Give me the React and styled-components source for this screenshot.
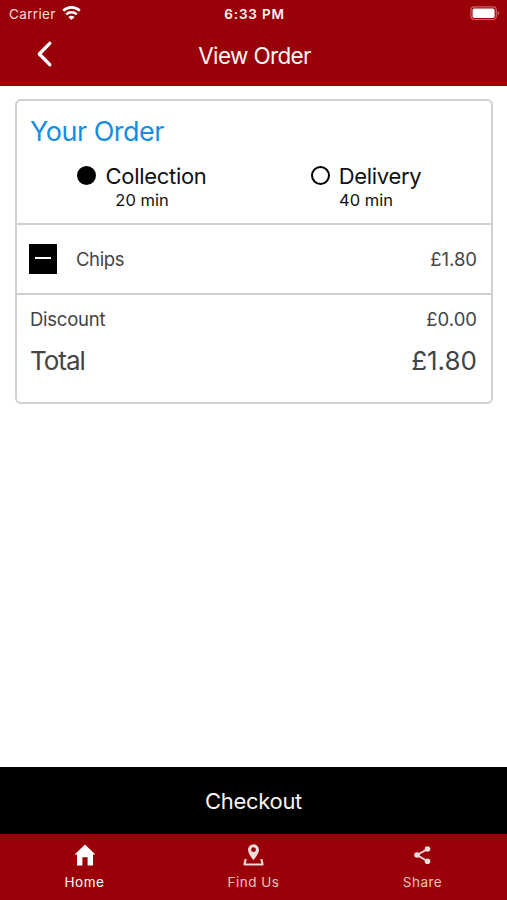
import React, { useState } from "react";
import styled, { createGlobalStyle } from "styled-components";

const GlobalStyle = createGlobalStyle`
  * {
    box-sizing: border-box;
  }
  body {
    margin: 0;
    background: #fff;
    font-family: Inter, "Liberation Sans", sans-serif;
  }
  button {
    border: none;
    padding: 0;
    background: none;
    color: inherit;
    font: inherit;
    cursor: pointer;
  }
`
const Screen = styled.div`
  display: flex;
  flex-direction: column;
  height: 100vh;
  overflow: hidden;
`
const Header = styled.header`
  height: 86px;
  flex: none;
  background: #9a0007;
  color: #fff5f4;
`
const StatusBar = styled.div`
  display: grid;
  grid-template-columns: 1fr auto 1fr;
  align-items: center;
  height: 27px;
  padding: 0 7px 0 9px;
  font-size: 13.5px;
`
const Carrier = styled.div`
  display: flex;
  align-items: center;
  gap: 6px;
  color: #f6dcdc;
  letter-spacing: 0.35px;
`
const Clock = styled.div`
  font-weight: 600;
  font-size: 13.5px;
  letter-spacing: 0.8px;
`
const BatteryBox = styled.div`
  display: flex;
  justify-content: flex-end;
`
const NavBar = styled.div`
  display: grid;
  grid-template-columns: 90px 1fr 90px;
  align-items: center;
  height: 58px;
`
const BackButton = styled.button`
  display: flex;
  height: 32px;
  padding-left: 35px;
`
const Title = styled.h1`
  margin: 0;
  padding-left: 2px;
  text-align: center;
  font-size: 22.5px;
  font-weight: 400;
  line-height: 28px;
  letter-spacing: -0.65px;
`
const Content = styled.main`
  flex: 1;
  padding: 13px 14px 0 15px;
`
const Card = styled.section`
  height: 305px;
  border: 2px solid #d0d0d0;
  border-radius: 6px;
  color: #444;
`
const OrderHead = styled.div`
  height: 124px;
  padding: 13px 13px 0;
  border-bottom: 2px solid #d0d0d0;
`
const Heading = styled.h2`
  margin: 0;
  color: #168de2;
  font-size: 27px;
  font-weight: 400;
  line-height: 36px;
  letter-spacing: -0.5px;
`
const Options = styled.div`
  display: grid;
  grid-template-columns: 1fr 1fr;
  margin-top: 13px;
`
const Option = styled.button`
  display: flex;
  flex-direction: column;
  align-items: center;
  color: #111;
`
const OptionName = styled.span`
  display: flex;
  align-items: center;
  gap: 9px;
  font-size: 22px;
  line-height: 26px;
  letter-spacing: -0.3px;
`
const Radio = styled.span`
  width: 19px;
  height: 19px;
  margin-bottom: 2px;
  border: 2px solid #000;
  border-radius: 50%;
  background: ${(props) => (props.$checked ? "#000" : "transparent")};
`
const OptionTime = styled.span`
  font-size: 16.5px;
  line-height: 22px;
`
const ItemRow = styled.div`
  display: flex;
  align-items: center;
  height: 70px;
  padding: 0 14px 0 12px;
  border-bottom: 2px solid #d0d0d0;
  font-size: 18.5px;
`
const RemoveButton = styled.button`
  display: flex;
  justify-content: center;
  align-items: center;
  width: 28px;
  height: 30px;
  margin-right: 19px;
  background: #000;
`
const Minus = styled.span`
  width: 16px;
  height: 2px;
  margin-bottom: 2px;
  background: #fff;
`
const ItemName = styled.span`
  flex: 1;
  letter-spacing: -0.4px;
`
const Totals = styled.div`
  padding: 10px 14px 0 13px;
`
const SumRow = styled.div`
  display: flex;
  justify-content: space-between;
  align-items: center;
  height: ${(props) => (props.$large ? "54px" : "28px")};
  font-size: ${(props) => (props.$large ? "26px" : "18.5px")};
`
const SumLabel = styled.span`
  letter-spacing: ${(props) => (props.$large ? "-1px" : "-0.25px")};
`
const Checkout = styled.button`
  && {
    flex: none;
    height: 67px;
    background: #000;
    color: #f4f4f4;
    font-size: 22px;
    letter-spacing: -0.3px;
  }
`
const TabBar = styled.nav`
  display: grid;
  grid-template-columns: repeat(3, 1fr);
  flex: none;
  height: 66px;
  background: #9a0007;
`
const TabButton = styled.button`
  && {
    display: flex;
    flex-direction: column;
    align-items: center;
    padding-top: 10px;
    color: ${(props) => (props.$active ? "#fff" : "#e6c3c3")};
    font-size: 13.5px;
    line-height: 20px;
  }
`
const TabLabel = styled.span`
  margin-top: 6px;
  letter-spacing: 0.5px;
`

const WifiIcon = () => (
  <svg width="19" height="15" viewBox="0 0 19 15" fill="none" stroke="#fff">
    <path d="M1.2 4.7C5.9.2 13.1.2 17.8 4.7" strokeWidth="2.6" />
    <path d="M4.2 8.3c3-2.8 7.6-2.8 10.6 0" strokeWidth="2.4" />
    <path d="M9.5 14 6.4 11.1c1.7-1.7 4.5-1.7 6.2 0z" fill="#fff" stroke="none" />
  </svg>
)

const BatteryIcon = () => (
  <svg width="30" height="15" viewBox="0 0 30 15">
    <rect x="0.9" y="0.9" width="25.4" height="12.6" rx="3.4" fill="none" stroke="#c9666a" strokeWidth="1.2" />
    <rect x="2.6" y="2.6" width="22" height="9.4" rx="1.8" fill="#fff" />
    <path d="M27.6 5v4.4c2.3-.8 2.3-3.6 0-4.4z" fill="#c9666a" />
  </svg>
)

const BackIcon = () => (
  <svg width="18" height="28" viewBox="0 0 18 28" fill="none">
    <path d="M14.8 3.3 4.3 14l10.5 10.7" stroke="#fff" strokeWidth="3.3" strokeLinecap="round" strokeLinejoin="round" />
  </svg>
)

const HomeIcon = () => (
  <svg width="22" height="22" viewBox="0 0 22 22">
    <path d="M11 0.5 21.4 10.6H19v10.8h-5.4v-8.2H8.4v8.2H3V10.6H.6z" fill="#fff" />
  </svg>
)

const FindIcon = () => (
  <svg width="22" height="22" viewBox="0 0 22 22">
    <path
      d="M10.5 .3a5.5 5.5 0 0 0-5.5 5.5c0 3.9 5.5 10.4 5.5 10.4s5.5-6.5 5.5-10.4A5.5 5.5 0 0 0 10.5 .3zm0 3a2.4 2.4 0 1 1 0 4.8 2.4 2.4 0 0 1 0-4.8z"
      fill="#f0dcdc"
      fillRule="evenodd"
    />
    <path d="M2.7 15 1.4 20.4h18.2L18.3 15" fill="none" stroke="#f0dcdc" strokeWidth="2" strokeLinejoin="round" />
  </svg>
)

const ShareIcon = () => (
  <svg width="22" height="22" viewBox="0 0 22 22" fill="#f0dcdc">
    <path d="M15.5 5.1 5.1 11l10.4 6.2" fill="none" stroke="#f0dcdc" strokeWidth="1.8" />
    <circle cx="15.5" cy="5" r="2.8" />
    <circle cx="5" cy="11" r="2.8" />
    <circle cx="15.5" cy="17.2" r="2.8" />
  </svg>
)

const options = [
  { name: "Collection", time: "20 min" },
  { name: "Delivery", time: "40 min" },
]

const tabs = [
  { label: "Home", Icon: HomeIcon },
  { label: "Find Us", Icon: FindIcon },
  { label: "Share", Icon: ShareIcon },
]

export default function App() {
  const [method, setMethod] = useState("Collection")
  const [tab, setTab] = useState("Home")

  return (
    <Screen>
      <GlobalStyle />
      <Header>
        <StatusBar>
          <Carrier>
            Carrier <WifiIcon />
          </Carrier>
          <Clock>6:33 PM</Clock>
          <BatteryBox>
            <BatteryIcon />
          </BatteryBox>
        </StatusBar>
        <NavBar>
          <BackButton aria-label="Back">
            <BackIcon />
          </BackButton>
          <Title>View Order</Title>
        </NavBar>
      </Header>
      <Content>
        <Card>
          <OrderHead>
            <Heading>Your Order</Heading>
            <Options>
              {options.map((option) => (
                <Option key={option.name} onClick={() => setMethod(option.name)}>
                  <OptionName>
                    <Radio $checked={method === option.name} />
                    {option.name}
                  </OptionName>
                  <OptionTime>{option.time}</OptionTime>
                </Option>
              ))}
            </Options>
          </OrderHead>
          <ItemRow>
            <RemoveButton aria-label="Remove Chips">
              <Minus />
            </RemoveButton>
            <ItemName>Chips</ItemName>
            <span>£1.80</span>
          </ItemRow>
          <Totals>
            <SumRow>
              <SumLabel>Discount</SumLabel>
              <span>£0.00</span>
            </SumRow>
            <SumRow $large>
              <SumLabel $large>Total</SumLabel>
              <span>£1.80</span>
            </SumRow>
          </Totals>
        </Card>
      </Content>
      <Checkout>Checkout</Checkout>
      <TabBar>
        {tabs.map(({ label, Icon }) => (
          <TabButton key={label} $active={tab === label} onClick={() => setTab(label)}>
            <Icon />
            <TabLabel>{label}</TabLabel>
          </TabButton>
        ))}
      </TabBar>
    </Screen>
  );
}
